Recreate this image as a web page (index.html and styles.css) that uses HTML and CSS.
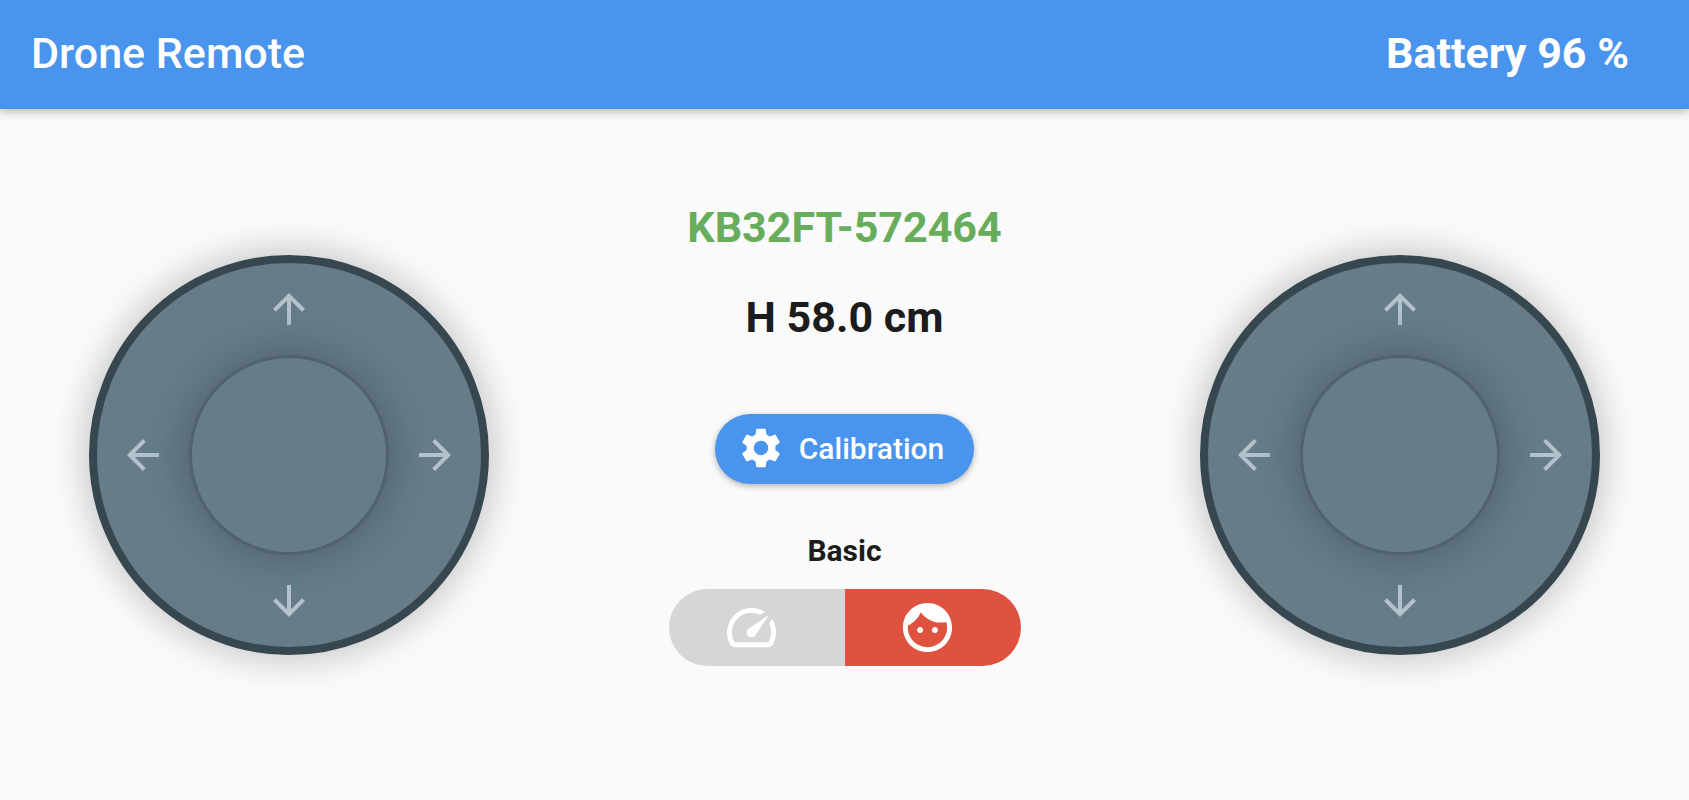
FILE: index.html
```
<!DOCTYPE html>
<html lang="en">
<head>
    <meta charset="UTF-8">
    <meta name="viewport" content="width=device-width, initial-scale=1.0">
    <title>Drone Remote</title>
    <link rel="stylesheet" href="styles.css">
</head>
<body>
    <header class="app-bar">
        <h1 class="app-title">Drone Remote</h1>
        <span class="battery">Battery 96 %</span>
    </header>
    <main class="remote">
        <div class="joystick">
            <button type="button" class="arrow arrow-up" aria-label="Up">
                <svg viewBox="0 0 24 24"><path d="M4 12l1.41 1.41L11 7.83V20h2V7.83l5.58 5.59L20 12l-8-8-8 8z"/></svg>
            </button>
            <button type="button" class="arrow arrow-left" aria-label="Left">
                <svg viewBox="0 0 24 24"><path d="M20 11H7.83l5.59-5.59L12 4l-8 8 8 8 1.41-1.41L7.83 13H20v-2z"/></svg>
            </button>
            <div class="knob"></div>
            <button type="button" class="arrow arrow-right" aria-label="Right">
                <svg viewBox="0 0 24 24"><path d="M12 4l-1.41 1.41L16.17 11H4v2h12.17l-5.58 5.59L12 20l8-8z"/></svg>
            </button>
            <button type="button" class="arrow arrow-down" aria-label="Down">
                <svg viewBox="0 0 24 24"><path d="M20 12l-1.41-1.41L13 16.17V4h-2v12.17l-5.58-5.59L4 12l8 8 8-8z"/></svg>
            </button>
        </div>

        <section class="panel">
            <h2 class="serial">KB32FT-572464</h2>
            <p class="height">H 58.0 cm</p>
            <button type="button" class="btn">
                <svg class="btn-icon" viewBox="0 0 24 24"><path d="M19.14,12.94c0.04-0.3,0.06-0.61,0.06-0.94c0-0.32-0.02-0.64-0.07-0.94l2.03-1.58c0.18-0.14,0.23-0.41,0.12-0.61l-1.92-3.32c-0.12-0.22-0.37-0.29-0.59-0.22l-2.39,0.96c-0.5-0.38-1.03-0.7-1.62-0.94L14.4,2.81c-0.04-0.24-0.24-0.41-0.48-0.41h-3.84c-0.24,0-0.43,0.17-0.47,0.41L9.25,5.35C8.66,5.59,8.12,5.92,7.63,6.29L5.24,5.33c-0.22-0.08-0.47,0-0.59,0.22L2.74,8.87C2.62,9.08,2.66,9.34,2.86,9.48l2.03,1.58C4.84,11.36,4.8,11.69,4.8,12s0.02,0.64,0.07,0.94l-2.03,1.58c-0.18,0.14-0.23,0.41-0.12,0.61l1.92,3.32c0.12,0.22,0.37,0.29,0.59,0.22l2.39-0.96c0.5,0.38,1.03,0.7,1.62,0.94l0.36,2.54c0.05,0.24,0.24,0.41,0.48,0.41h3.84c0.24,0,0.44-0.17,0.47-0.41l0.36-2.54c0.59-0.24,1.13-0.56,1.62-0.94l2.39,0.96c0.22,0.08,0.47,0,0.59-0.22l1.92-3.32c0.12-0.22,0.07-0.47-0.12-0.61L19.14,12.94z M12,15.6c-1.98,0-3.6-1.62-3.6-3.6s1.62-3.6,3.6-3.6s3.6,1.62,3.6,3.6S13.98,15.6,12,15.6z"/></svg>
                Calibration
            </button>
            <p class="mode-label" id="modeLabel">Basic</p>
            <div class="mode-toggle" role="radiogroup" aria-labelledby="modeLabel">
                <input type="radio" class="mode-input" id="modeSport" name="mode" value="sport" aria-label="Sport">
                <label for="modeSport" class="mode-option">
                    <svg viewBox="0 0 24 24"><path d="M20.38 8.57l-1.23 1.85a8 8 0 0 1-.22 7.58H5.07A8 8 0 0 1 15.58 6.85l1.85-1.23A10 10 0 0 0 3.35 19a2 2 0 0 0 1.72 1h13.85a2 2 0 0 0 1.74-1 10 10 0 0 0-.27-10.44zm-9.79 6.84a2 2 0 0 0 2.83 0l5.66-8.49-8.49 5.66a2 2 0 0 0 0 2.83z"/></svg>
                </label>
                <input type="radio" class="mode-input" id="modeBasic" name="mode" value="basic" aria-label="Basic" checked>
                <label for="modeBasic" class="mode-option">
                    <svg viewBox="0 0 24 24"><path d="M9 11.75c-.69 0-1.25.56-1.25 1.25s.56 1.25 1.25 1.25 1.25-.56 1.25-1.25-.56-1.25-1.25-1.25zm6 0c-.69 0-1.25.56-1.25 1.25s.56 1.25 1.25 1.25 1.25-.56 1.25-1.25-.56-1.25-1.25-1.25zM12 2C6.48 2 2 6.48 2 12s4.48 10 10 10 10-4.48 10-10S17.52 2 12 2zm0 18c-4.41 0-8-3.59-8-8 0-.29.02-.58.05-.86 2.36-1.05 4.23-2.98 5.21-5.37C11.07 8.33 14.05 10 17.42 10c.78 0 1.53-.09 2.25-.26.21.71.33 1.47.33 2.26 0 4.41-3.59 8-8 8z"/></svg>
                </label>
            </div>
        </section>

        <div class="joystick">
            <button type="button" class="arrow arrow-up" aria-label="Forward">
                <svg viewBox="0 0 24 24"><path d="M4 12l1.41 1.41L11 7.83V20h2V7.83l5.58 5.59L20 12l-8-8-8 8z"/></svg>
            </button>
            <button type="button" class="arrow arrow-left" aria-label="Turn left">
                <svg viewBox="0 0 24 24"><path d="M20 11H7.83l5.59-5.59L12 4l-8 8 8 8 1.41-1.41L7.83 13H20v-2z"/></svg>
            </button>
            <div class="knob"></div>
            <button type="button" class="arrow arrow-right" aria-label="Turn right">
                <svg viewBox="0 0 24 24"><path d="M12 4l-1.41 1.41L16.17 11H4v2h12.17l-5.58 5.59L12 20l8-8z"/></svg>
            </button>
            <button type="button" class="arrow arrow-down" aria-label="Backward">
                <svg viewBox="0 0 24 24"><path d="M20 12l-1.41-1.41L13 16.17V4h-2v12.17l-5.58-5.59L4 12l8 8 8-8z"/></svg>
            </button>
        </div>
    </main>
</body>
</html>
```

FILE: styles.css
```
* {
    box-sizing: border-box;
}
body {
    font-family: Roboto, "Liberation Sans", Arial, sans-serif;
    background-color: #fafafa;
    color: #1c1c1c;
    margin: 0;
    min-height: 100vh;
    display: flex;
    flex-direction: column;
}
h1, h2, p {
    margin: 0;
}
svg {
    display: block;
    fill: currentColor;
}

/* Top bar */
.app-bar {
    display: flex;
    justify-content: space-between;
    align-items: center;
    padding: 28px 60px 31px 31px;
    background-color: #4994ec;
    color: white;
    font-size: 43px;
    line-height: 50px;
    box-shadow: 0 2px 10px rgba(0, 0, 0, 0.3);
}
.app-title {
    font-size: 43px;
    font-weight: 500;
}
.battery {
    font-weight: 700;
}

.remote {
    flex: 1;
    display: flex;
    justify-content: space-between;
    align-items: center;
    padding: 0 89px;
}

/* Joysticks */
.joystick {
    display: grid;
    grid-template-columns: 48px 1fr 48px;
    grid-template-rows: 48px 1fr 48px;
    place-items: center;
    width: 400px;
    height: 400px;
    padding: 22px;
    border: 8px solid #37474f;
    border-radius: 50%;
    background-color: #667d89;
    box-shadow: 0 0 32px 8px rgba(0, 0, 0, 0.18);
}
.knob {
    grid-area: 2 / 2;
    width: 200px;
    height: 200px;
    border: 3px solid #4f626d;
    border-radius: 50%;
    background-color: #667d89;
    box-shadow: 0 0 36px 8px rgba(64, 72, 92, 0.45);
}
.arrow {
    width: 48px;
    height: 48px;
    padding: 0;
    border: none;
    background: none;
    color: #b3c2cb;
    cursor: pointer;
}
.arrow-up {
    grid-area: 1 / 2;
}
.arrow-left {
    grid-area: 2 / 1;
}
.arrow-right {
    grid-area: 2 / 3;
}
.arrow-down {
    grid-area: 3 / 2;
}

/* Middle column */
.panel {
    display: flex;
    flex-direction: column;
    align-items: center;
    padding-bottom: 41px;
}
.serial,
.height {
    font-size: 43px;
    line-height: 50px;
    font-weight: 700;
    margin-bottom: 40px;
}
.serial {
    color: #67ad5b;
}
.btn {
    display: flex;
    align-items: center;
    gap: 14px;
    margin: 32px 0 50px;
    padding: 10px 30px 12px 22px;
    border: none;
    border-radius: 35px;
    background-color: #4994ec;
    color: white;
    font-family: inherit;
    font-size: 30px;
    font-weight: 500;
    box-shadow: 0 2px 6px rgba(0, 0, 0, 0.3);
    cursor: pointer;
}
.btn-icon {
    width: 48px;
    height: 48px;
}
.mode-label {
    font-size: 30px;
    line-height: 34px;
    font-weight: 700;
    margin-bottom: 21px;
}
.mode-toggle {
    display: flex;
    border-radius: 39px;
    overflow: hidden;
}
.mode-input {
    position: absolute;
    opacity: 0;
}
.mode-option {
    padding: 9px 64px 9px 53px;
    background-color: #d6d6d6;
    color: white;
    cursor: pointer;
}
.mode-option svg {
    width: 59px;
    height: 59px;
}
.mode-input:checked + .mode-option {
    background-color: #e05240;
}
```
